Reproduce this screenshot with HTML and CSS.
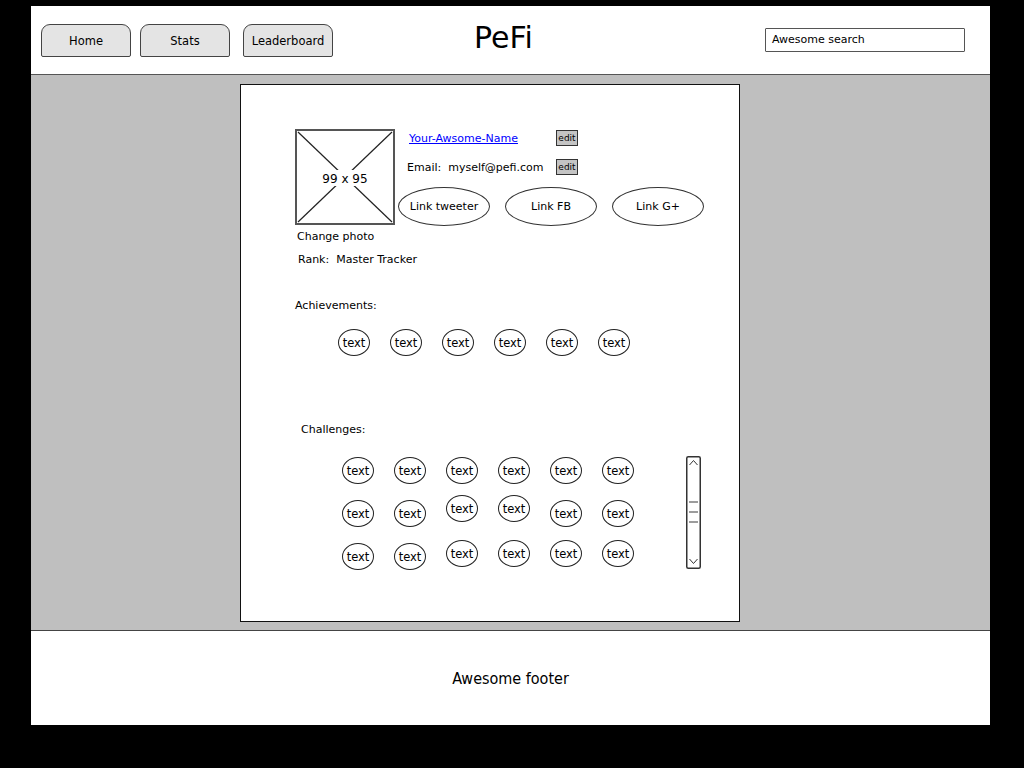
FILE: index.html
```html
<!DOCTYPE html>
<html lang="en">

<head>
    <meta charset="UTF-8">
    <meta name="viewport" content="width=device-width, initial-scale=1.0">
    <title>PeFi - Profile</title>
    <link rel="stylesheet" href="styles.css">
</head>

<body>
    <div class="page">

        <header class="top">
            <nav class="tabs">
                <a class="tab">Home</a>
                <a class="tab">Stats</a>
                <a class="tab wide">Leaderboard</a>
            </nav>
            <h1 class="logo">PeFi</h1>
            <div class="search">Awesome search</div>
        </header>

        <main class="main">
            <div class="card">

                <div class="profile">
                    <div class="left">
                        <svg class="photo" width="100" height="96" viewBox="0 0 100 96">
                            <rect x="1" y="1" width="98" height="94" fill="#fff" stroke="#555" stroke-width="2"/>
                            <line x1="3" y1="3" x2="97" y2="93" stroke="#222" stroke-width="1.2"/>
                            <line x1="97" y1="3" x2="3" y2="93" stroke="#222" stroke-width="1.2"/>
                            <rect x="27" y="41" width="46" height="16" fill="#fff"/>
                            <text x="50" y="54" text-anchor="middle" class="photoText">99 x 95</text>
                        </svg>
                        <p class="line change">Change photo</p>
                        <p class="line rank">Rank:&nbsp; Master Tracker</p>
                    </div>

                    <div class="right">
                        <div class="row">
                            <a class="name" href="#">Your-Awsome-Name</a>
                            <span class="edit">edit</span>
                        </div>
                        <div class="row">
                            <span class="email">Email:&nbsp; myself@pefi.com</span>
                            <span class="edit">edit</span>
                        </div>
                        <div class="links">
                            <span class="oval">Link tweeter</span>
                            <span class="oval">Link FB</span>
                            <span class="oval">Link G+</span>
                        </div>
                    </div>
                </div>

                <p class="label ach">Achievements:</p>
                <div class="bubbles ach-row">
                    <span class="bubble">text</span>
                    <span class="bubble">text</span>
                    <span class="bubble">text</span>
                    <span class="bubble">text</span>
                    <span class="bubble">text</span>
                    <span class="bubble">text</span>
                </div>

                <p class="label chal">Challenges:</p>
                <div class="challenges">
                    <div class="grid">
                        <div class="bubbles">
                            <span class="bubble">text</span>
                            <span class="bubble">text</span>
                            <span class="bubble">text</span>
                            <span class="bubble">text</span>
                            <span class="bubble">text</span>
                            <span class="bubble">text</span>
                        </div>
                        <div class="bubbles">
                            <span class="bubble">text</span>
                            <span class="bubble">text</span>
                            <span class="bubble lift">text</span>
                            <span class="bubble lift">text</span>
                            <span class="bubble">text</span>
                            <span class="bubble">text</span>
                        </div>
                        <div class="bubbles">
                            <span class="bubble">text</span>
                            <span class="bubble">text</span>
                            <span class="bubble lift2">text</span>
                            <span class="bubble lift2">text</span>
                            <span class="bubble lift2">text</span>
                            <span class="bubble lift2">text</span>
                        </div>
                    </div>

                    <div class="scroll">
                        <svg width="15" height="113" viewBox="0 0 15 113">
                            <rect x="0.75" y="0.75" width="13.5" height="111.5" rx="1.5" fill="#fff" stroke="#333" stroke-width="1.5"/>
                            <polyline points="3.5,9 7.5,4.5 11.5,9" fill="none" stroke="#333" stroke-width="1"/>
                            <polyline points="3.5,103 7.5,107.5 11.5,103" fill="none" stroke="#333" stroke-width="1"/>
                            <line x1="3" y1="46" x2="12" y2="46" stroke="#666" stroke-width="1.3"/>
                            <line x1="3" y1="56" x2="12" y2="56" stroke="#666" stroke-width="1.3"/>
                            <line x1="3" y1="66" x2="12" y2="66" stroke="#666" stroke-width="1.3"/>
                        </svg>
                    </div>
                </div>

            </div>
        </main>

        <footer class="footer">
            <p>Awesome footer</p>
        </footer>

    </div>
</body>

</html>
```

FILE: styles.css
```css
body {
    margin: 0;
    padding: 0;
    background-color: #000;
    font-family: "DejaVu Sans", "Liberation Sans", sans-serif;
    font-size: 11px;
    color: #000;
}

.page {
    width: 959px;
    margin: 6px 0 0 31px;
}

/* header */
.top {
    display: flex;
    align-items: center;
    height: 68px;
    background-color: #fff;
    border-bottom: 1px solid #555;
    padding: 0 25px 0 10px;
}

.tabs {
    display: flex;
    gap: 9px;
    margin-top: 1px;
}

.tab {
    display: flex;
    align-items: center;
    justify-content: center;
    width: 88px;
    height: 31px;
    background-color: #e4e4e4;
    border: 1.5px solid #444;
    border-radius: 9px 9px 2px 2px;
    color: #000;
    font-size: 11.5px;
}

.wide {
    margin-left: 4px;
}

.logo {
    margin: -5px 0 0 141px;
    font-size: 30px;
    font-weight: normal;
    line-height: 34px;
}

.search {
    margin-left: auto;
    width: 192px;
    height: 22px;
    line-height: 22px;
    padding-left: 6px;
    border: 1.5px solid #555;
    border-radius: 1px;
    font-size: 11px;
    background-color: #fff;
}

/* grey area */
.main {
    height: 546px;
    background-color: #bfbfbf;
    border-bottom: 1px solid #444;
    padding: 9px 0 0 209px;
}

.card {
    width: 498px;
    height: 536px;
    background-color: #fff;
    border: 1px solid #111;
}

.profile {
    display: flex;
    padding: 44px 0 0 54px;
}

.left {
    width: 100px;
    flex-shrink: 0;
}

.photo {
    display: block;
}

.photoText {
    font-family: "DejaVu Sans", sans-serif;
    font-size: 12px;
}

.line {
    margin: 0;
    line-height: 15px;
    white-space: nowrap;
}

.change {
    margin-top: 4px;
    margin-left: 2px;
}

.rank {
    margin-top: 8px;
    margin-left: 3px;
}

.right {
    margin-left: 3px;
}

.row {
    display: flex;
    align-items: center;
    height: 16px;
    margin-top: 1px;
    margin-bottom: 13px;
}

.name {
    width: 147px;
    padding-left: 11px;
    color: #0000ff;
    text-decoration: underline;
}

.email {
    width: 149px;
    padding-left: 9px;
    white-space: nowrap;
}

.edit {
    width: 20px;
    height: 14px;
    line-height: 14px;
    text-align: center;
    font-size: 9px;
    background-color: #c4c4c4;
    border: 1.5px solid #333;
}

.links {
    display: flex;
    margin-top: -1px;
}

.oval {
    display: flex;
    align-items: center;
    justify-content: center;
    width: 90px;
    height: 37px;
    border: 1px solid #333;
    border-radius: 50%;
    margin-right: 15px;
    white-space: nowrap;
}

.label {
    margin: 0;
    line-height: 15px;
}

.ach {
    margin: 31px 0 0 54px;
}

.chal {
    margin: 66px 0 0 60px;
}

.bubbles {
    display: flex;
    gap: 20px;
}

.ach-row {
    margin: 16px 0 0 97px;
}

.bubble {
    display: flex;
    align-items: center;
    justify-content: center;
    width: 30px;
    height: 25px;
    border: 1.3px solid #222;
    border-radius: 50%;
    font-size: 11.5px;
}

.lift {
    margin-top: -5px;
    margin-bottom: 5px;
}

.lift2 {
    margin-top: -3px;
    margin-bottom: 3px;
}

.challenges {
    display: flex;
    margin: 19px 0 0 101px;
}

.grid {
    display: flex;
    flex-direction: column;
    gap: 16px;
    margin-top: 1px;
}

.scroll {
    margin-left: 52px;
    height: 113px;
}

.scroll svg {
    display: block;
}

/* footer */
.footer {
    height: 94px;
    background-color: #fff;
    display: flex;
    align-items: center;
    justify-content: center;
}

.footer p {
    margin: 0;
    font-family: "DejaVu Sans Condensed", "DejaVu Sans", sans-serif;
    font-size: 16px;
}
```
